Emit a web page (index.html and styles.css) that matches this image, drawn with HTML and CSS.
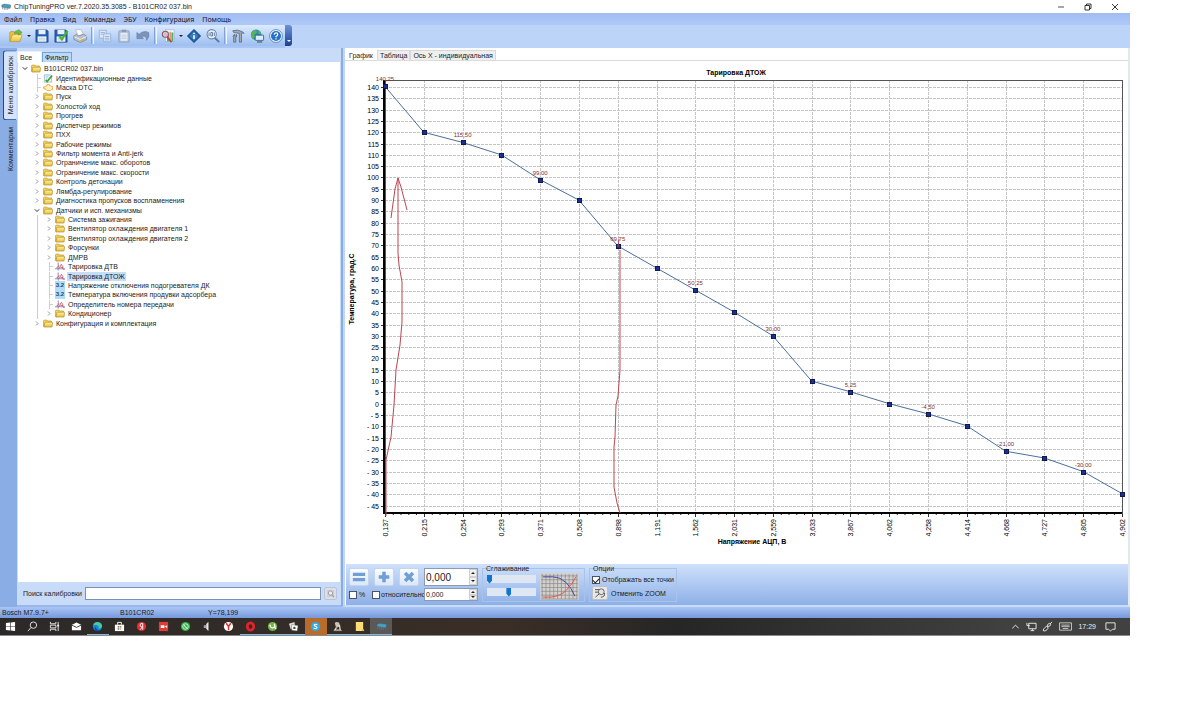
FILE: index.html
```
<!DOCTYPE html>
<html lang="ru">
<head>
    <meta charset="UTF-8">
    <meta name="viewport" content="width=device-width, initial-scale=1.0">
    <title>ChipTuningPRO</title>
    <link rel="stylesheet" href="styles.css">
</head>
<body>

    <!-- Icon set -->
    <svg class="sprite" aria-hidden="true">
        <linearGradient id="gFolder" x1="0" y1="0" x2="0" y2="1"><stop offset="0" stop-color="#fff3a0"/><stop offset="1" stop-color="#e9bd3c"/></linearGradient>
        <symbol id="folder" viewBox="0 0 11 9"><path d="M.5 8V1.5l.8-.8h3l1 1h4v1.5" fill="#f3d468" stroke="#b08a22" stroke-width=".6"/><path d="M1 8.4L2 3.6q.1-.5.6-.5h7.4q.5 0 .5.5L10 8q-.1.4-.6.4z" fill="url(#gFolder)" stroke="#a98620" stroke-width=".7"/></symbol>
        <symbol id="ident" viewBox="0 0 11 9"><path d="M1.5.5h7l1 1v7h-8z" fill="#eef6fb" stroke="#6c93aa" stroke-width=".6"/><path d="M3 6l1.6 1.8L10 1.2" fill="none" stroke="#35a23a" stroke-width="1.8"/><path d="M3 2.5h3M3 4h2" stroke="#7fb2d6" stroke-width=".6"/></symbol>
        <symbol id="dtc" viewBox="0 0 11 9"><path d="M3 2.6h1.4V1.4h3v1.2h1.2l.8 1h1.2v3.2H9.3l-1 1H4.4L3 6.4H2v-1H.6V3.8H2z" fill="#fff0c8" stroke="#efa63a" stroke-width="1"/></symbol>
        <symbol id="curve" viewBox="0 0 11 9"><path d="M3.500 0v9M0 7h11" stroke="#626c9c" stroke-width=".8"/><path d="M4.500 7l2.500-5 1.500 2.500V7l2 1M1.500 6q2 0 3-3M6 5.500h3" fill="none" stroke="#d44c62" stroke-width=".9"/></symbol>
        <symbol id="closed" viewBox="0 0 8 9"><path d="M3 2.500l2 2-2 2" fill="none" stroke="#8a8a8a" stroke-width=".9"/></symbol>
        <symbol id="open" viewBox="0 0 8 9"><path d="M1.800 3.300L4 5.500l2.200-2.200" fill="none" stroke="#333" stroke-width="1"/></symbol>
        <symbol id="twig" viewBox="0 0 8 9"><path d="M4.500 0v9M4.500 4.500H8" stroke="#bbb" stroke-width=".7"/></symbol>

        <symbol id="t-open" viewBox="0 0 16 16"><path d="M1 14V4l1-1h4l1 1.500h6V7" fill="#e9c244" stroke="#a8801a" stroke-width=".7"/><path d="M1 14.500l3-8h11l-2.500 8z" fill="url(#gFolder)" stroke="#b58f26" stroke-width=".7"/><path d="M6 5q1-4 5-3V.5L15 4l-4 3V5Q8 4.400 6 5z" fill="#6ac046" stroke="#3a8a26" stroke-width=".5"/></symbol>
        <symbol id="t-save" viewBox="0 0 16 16"><path d="M1 1h12.500L15 2.500V15H1z" fill="#2460b4" stroke="#143e86" stroke-width=".7"/><rect x="4" y="1" width="8" height="5" fill="#e8f1fb"/><rect x="3" y="8.500" width="10" height="6" fill="#fff"/><path d="M4 10.500h8M4 12.500h8" stroke="#8fb0dc" stroke-width=".8"/></symbol>
        <symbol id="t-check" viewBox="0 0 16 16"><use href="#t-save"/><path d="M6 8l3 4 6.500-10" fill="none" stroke="#4db428" stroke-width="2.400"/></symbol>
        <symbol id="t-print" viewBox="0 0 16 16"><path d="M3 1l6-.5L12 6 6 8z" fill="#fff" stroke="#98a3b5" stroke-width=".6"/><path d="M1 8l3-2 2 2 6-2 3.500 2v4l-7 3.500L1 12z" fill="#b9c0cc" stroke="#6c7484" stroke-width=".7"/><path d="M1.500 9l7 3 7-3.500" fill="none" stroke="#f2f4f8"/><path d="M8.500 13.500l4-2" stroke="#e3b030" stroke-width="1.500"/></symbol>
        <symbol id="t-copy" viewBox="0 0 16 16"><g fill="#dce7f7" stroke="#8ba7d0" stroke-width=".8"><path d="M1.500 1.500h8v9h-8z"/><path d="M6.500 5.500h8v9h-8z"/></g><path d="M3 4h5M3 6h3M8 8.500h5M8 10.500h5M8 12.500h5" stroke="#89aad8" stroke-width=".9"/></symbol>
        <symbol id="t-paste" viewBox="0 0 16 16"><rect x="2" y="2" width="12" height="13" rx="1" fill="#b0c1da" stroke="#8698b5" stroke-width=".8"/><path d="M4 4.500h8v9H4z" fill="#e6edf7"/><rect x="5.500" y=".8" width="5" height="2.600" fill="#8999b2"/><path d="M5 7h6M5 9h6M5 11h6" stroke="#b1c2da" stroke-width=".8"/></symbol>
        <symbol id="t-undo" viewBox="0 0 16 16"><path d="M1 11V4l2.500 2Q9 1 14.500 4q1.500 5-2.500 9 .5-6-5.500-4.500L8.500 11z" fill="#7d94b8" stroke="#61799e" stroke-width=".6"/></symbol>
        <symbol id="t-chart" viewBox="0 0 16 16"><rect x="5" y="1" width="10" height="13" fill="#f5f9fd" stroke="#8fa6c4" stroke-width=".6"/><path d="M8 14V7M13 14V4" stroke="#58a85c" stroke-width="2.200"/><path d="M10.500 13V3" stroke="#db9488" stroke-width="1.800"/><circle cx="5" cy="6" r="3.500" fill="#d9c0c8" stroke="#85576d" stroke-width="1.200"/><path d="M7 9l5 6" stroke="#ba473e" stroke-width="2"/></symbol>
        <symbol id="t-info" viewBox="0 0 16 16"><path d="M8 .5L15.500 8 8 15.500.5 8z" fill="#1d5fa8" stroke="#123e78"/><path d="M8 3L13 8l-5 5-5-5z" fill="#377fc6"/><path d="M8 7v4.500M8 4.200v1.600" stroke="#fff" stroke-width="1.800"/></symbol>
        <symbol id="t-find" viewBox="0 0 16 16"><circle cx="6.500" cy="6" r="5.300" fill="#e8f2fc" stroke="#6c87ad" stroke-width="1.200"/><path d="M3.500 4v4M5.500 4h2v4h-2zM9.500 4v4" fill="none" stroke="#49668e" stroke-width=".9"/><path d="M10 10l5 5" stroke="#5c78a2" stroke-width="2.200"/></symbol>
        <symbol id="t-tools" viewBox="0 0 16 16"><path d="M2 2q5-2 11 1l2 2-3-.6V15H9.500V5L3 4zM4 6q-3 2-1 4v5h2.500v-5Q8 8 6 6v2H4z" fill="#9dabb9" stroke="#45525f" stroke-width=".7"/></symbol>
        <symbol id="t-net" viewBox="0 0 16 16"><circle cx="7" cy="6.500" r="6" fill="#2f86c9"/><path d="M1 6q2-5 6-5l1 3-3 2 1 4-3 1Q1 9 1 6zM9 1.500q3 1 4 4L10 6z" fill="#55b650"/><rect x="6" y="7" width="9.500" height="6" rx=".6" fill="#d9edfb" stroke="#2b5378" stroke-width=".9"/><path d="M8 14.800h6" stroke="#355" stroke-width="1.200"/></symbol>
        <symbol id="t-help" viewBox="0 0 16 16"><circle cx="8" cy="8" r="7.300" fill="#fff" stroke="#2a62ab" stroke-width=".8"/><circle cx="8" cy="8" r="5.800" fill="#2572c7"/><path d="M6 6.500Q6 4.300 8 4.300t2 1.900Q10 7.300 8 8.500v1M8 10.500v1.600" fill="none" stroke="#fff" stroke-width="1.400"/></symbol>
        <symbol id="chip" viewBox="0 0 12 8"><path d="M1 1.500L4 .5l7.500 1v3L9 5.500 1 4z" fill="#4d9cba" stroke="#255f7d" stroke-width=".5"/><path d="M2 4v2.500M4 5v2.500M6 5v2.500M8 5.500v2M10.500 5v1.500" stroke="#6a7882" stroke-width=".8"/></symbol>
    </svg>

    <div class="desktop">
        <header class="titlebar">
            <svg class="app-icon"><use href="#chip"/></svg>
            <h1>ChipTuningPRO ver.7.2020.35.3085 - B101CR02 037.bin</h1>
            <div class="window-buttons">
                <button aria-label="Свернуть"><svg viewBox="0 0 8 8"><path d="M1 4h6" stroke="#222" stroke-width=".8"/></svg></button>
                <button aria-label="Восстановить"><svg viewBox="0 0 8 8"><path d="M1 2.500h4.500V7H1zM2.500 2.500V1H7v4.500H5.500" fill="none" stroke="#222" stroke-width=".9"/></svg></button>
                <button aria-label="Закрыть"><svg viewBox="0 0 8 8"><path d="M1 1l6 6M7 1L1 7" stroke="#222" stroke-width=".9"/></svg></button>
            </div>
        </header>

        <nav class="menu">
            <a href="#">Файл</a><a href="#">Правка</a><a href="#">Вид</a><a href="#">Команды</a><a href="#">ЭБУ</a><a href="#">Конфигурация</a><a href="#">Помощь</a>
        </nav>

        <div class="toolbar">
            <div class="tools">
                <button aria-label="Открыть"><svg><use href="#t-open"/></svg></button>
                <i class="drop"></i>
                <button aria-label="Сохранить"><svg><use href="#t-save"/></svg></button>
                <button aria-label="Сохранить с проверкой"><svg><use href="#t-check"/></svg></button>
                <button aria-label="Печать"><svg><use href="#t-print"/></svg></button>
                <i class="sep"></i>
                <button aria-label="Копировать"><svg><use href="#t-copy"/></svg></button>
                <button aria-label="Вставить"><svg><use href="#t-paste"/></svg></button>
                <button aria-label="Отменить"><svg><use href="#t-undo"/></svg></button>
                <i class="sep"></i>
                <button aria-label="Сравнение"><svg><use href="#t-chart"/></svg></button>
                <i class="drop"></i>
                <button aria-label="Информация"><svg><use href="#t-info"/></svg></button>
                <button aria-label="Поиск"><svg><use href="#t-find"/></svg></button>
                <i class="sep"></i>
                <button aria-label="Настройки"><svg><use href="#t-tools"/></svg></button>
                <button aria-label="Сеть"><svg><use href="#t-net"/></svg></button>
                <button aria-label="Справка"><svg><use href="#t-help"/></svg></button>
            </div>
            <button class="overflow" aria-label="Ещё"><i class="drop"></i></button>
        </div>

        <main class="workspace">
            <div class="side-tabs">
                <button class="active">Меню калибровок</button>
                <button>Комментарии</button>
            </div>

            <section class="sidebar">
                <div class="tabs">
                    <button class="active">Все</button>
                    <button>Фильтр</button>
                </div>
                <div class="tree-box">
                    <ul class="tree" id="tree"></ul>
                </div>
                <div class="search">
                    <label for="search">Поиск калибровки</label>
                    <input type="text" id="search">
                    <button aria-label="Найти"><svg viewBox="0 0 10 10"><path d="M1 1h8v8H1z" fill="#cfcfd6"/><circle cx="5" cy="4.500" r="2.400" fill="#eee" stroke="#9a9aa6"/><path d="M6.500 6.500L9 9" stroke="#9a9aa6" stroke-width="1.200"/></svg></button>
                </div>
            </section>

            <section class="editor">
                <div class="tabs chart-tabs">
                    <button class="active">График</button>
                    <button>Таблица</button>
                    <button>Ось X - индивидуальная</button>
                </div>
                <div class="chart-page">
                    <svg class="chart" id="chart" viewBox="0 0 783 503"></svg>
                </div>

                <div class="controls">
                    <div class="value-group">
                        <div class="row">
                            <button class="op" aria-label="Равно"><svg viewBox="0 0 16 16"><path d="M1 5h14M1 11h14" stroke="#6f9fd4" stroke-width="3.500"/></svg></button>
                            <button class="op" aria-label="Прибавить"><svg viewBox="0 0 16 16"><path d="M2 8h12M8 2v12" stroke="#6f9fd4" stroke-width="4"/></svg></button>
                            <button class="op" aria-label="Умножить"><svg viewBox="0 0 16 16"><path d="M3.500 3.500l9 9M12.500 3.500l-9 9" stroke="#6f9fd4" stroke-width="4"/></svg></button>
                            <span class="spin big"><input type="text" value="0,000" aria-label="Значение"><span class="arrows"><button aria-label="Больше"></button><button aria-label="Меньше"></button></span></span>
                        </div>
                        <div class="row tight">
                            <label class="check percent"><input type="checkbox">%</label>
                            <label class="check relative"><input type="checkbox">относительно</label>
                            <span class="spin"><input type="text" value="0,000" aria-label="Шаг"><span class="arrows"><button aria-label="Больше"></button><button aria-label="Меньше"></button></span></span>
                        </div>
                    </div>

                    <fieldset class="smooth">
                        <legend>Сглаживание</legend>
                        <div class="sliders">
                            <input type="range" min="0" max="100" value="0" aria-label="Сглаживание 1">
                            <input type="range" min="0" max="100" value="44" aria-label="Сглаживание 2">
                        </div>
                        <svg class="preview" viewBox="0 0 40 28"><rect width="40" height="28" fill="#d4d2cf"/><path d="M2 1v26M6 1v26M10 1v26M14 1v26M18 1v26M22 1v26M26 1v26M30 1v26M34 1v26M38 1v26M1 3h38M1 7h38M1 11h38M1 15h38M1 19h38M1 23h38M1 27h38" stroke="#8e8c8a" stroke-width=".8"/><path d="M3 4h10q8 0 14 6 5 5 9 14" fill="none" stroke="#4544a4"/><path d="M3 25h8q10-1 16-7 6-6 10-14" fill="none" stroke="#df5348"/></svg>
                    </fieldset>

                    <fieldset class="options">
                        <legend>Опции</legend>
                        <label class="check"><input type="checkbox" checked>Отображать все точки</label>
                        <div class="zoom-row">
                            <button id="zoomOff" aria-label="Отменить ZOOM"><svg viewBox="0 0 14 12"><circle cx="8.500" cy="4.500" r="3.500" fill="#e5e5e5" stroke="#555"/><path d="M6 7l-4.500 4M1 2h5M1 5h4M8 11q5 0 4.500-5" fill="none" stroke="#555" stroke-width="1.200"/></svg></button>
                            <label for="zoomOff">Отменить ZOOM</label>
                        </div>
                    </fieldset>
                </div>
            </section>
        </main>

        <footer class="status">
            <span>Bosch M7.9.7+</span><span>B101CR02</span><span>Y=78,199</span>
        </footer>

        <div class="taskbar">
            <div class="apps">
                <button aria-label="Пуск"><svg viewBox="0 0 12 12"><path d="M1 2.300L5.500 1.700v4H1zM6.200 1.600L11 1v4.700H6.200zM1 6.400h4.500v4L1 9.800zM6.200 6.400H11V11l-4.800-.6z" fill="#fff"/></svg></button>
                <button aria-label="Поиск Windows"><svg viewBox="0 0 12 12"><circle cx="7" cy="4.500" r="3.500" fill="none" stroke="#eee"/><path d="M4.500 7L1 11" stroke="#eee"/></svg></button>
                <button aria-label="Представление задач"><svg viewBox="0 0 12 12"><path d="M1.500 1v2h6V1M1.500 11V9h6v2M1.500 4.500h6v3h-6zM10 1v10" fill="none" stroke="#eee"/><path d="M9 4h2v2H9z" fill="#eee"/></svg></button>
                <button aria-label="Почта"><svg viewBox="0 0 12 12"><path d="M1 4l5-2.500L11 4v6H1z" fill="#fff"/><path d="M1 4.500L6 7l5-2.500" fill="none" stroke="#333"/></svg></button>
                <button class="running" aria-label="Edge"><svg viewBox="0 0 12 12"><circle cx="6" cy="6" r="5" fill="#1684d8"/><path d="M1.200 5Q2 1 6 1q5 .5 5 5-1 2.500-4 2Q8 5 5 4.400 2.500 4 1.200 5z" fill="#45c9a0"/><path d="M4 6q0 4 5 4-2 2-5 .6Q2 9 4 6z" fill="#104c9b"/></svg></button>
                <button aria-label="Магазин"><svg viewBox="0 0 12 12"><path d="M1 4h10v7H1z" fill="#fff"/><path d="M4 4V1.500h4V4" fill="none" stroke="#fff"/><path d="M4 5.500h1.700v1.700H4z" fill="#e74b35"/><path d="M6.300 5.500H8v1.700H6.300z" fill="#64a936"/><path d="M4 7.800h1.700v1.700H4z" fill="#3185d0"/><path d="M6.300 7.800H8v1.700H6.300z" fill="#e9b43a"/></svg></button>
                <button aria-label="Яндекс"><svg viewBox="0 0 12 12"><circle cx="6" cy="6" r="5" fill="#e62f32"/><path d="M7.300 9.500v-7H6.500q-2 0-2 2t2.500 2L4.500 9.500" fill="none" stroke="#fff"/></svg></button>
                <button aria-label="Запись экрана"><svg viewBox="0 0 12 12"><rect x="1" y="1" width="10" height="10" fill="#e53935"/><path d="M3 4.500h4v3H3zM7.500 6L10 4.500v3z" fill="#fff"/></svg></button>
                <button aria-label="WhatsApp"><svg viewBox="0 0 12 12"><circle cx="6" cy="6" r="5" fill="#33b34b"/><circle cx="6" cy="6" r="3" fill="none" stroke="#d9f7d9"/><path d="M4.800 4.500q.3 2.500 2.700 3" fill="none" stroke="#fff"/></svg></button>
                <button aria-label="Звук"><svg viewBox="0 0 12 12"><path d="M3 4.500h2L8 1v10L5 7.500H3z" fill="#9ea3a8"/><path d="M6 3l2-2v10L6 8.500z" fill="#e5e5e5"/></svg></button>
                <button aria-label="Яндекс Браузер"><svg viewBox="0 0 12 12"><circle cx="6" cy="6" r="5" fill="#fff"/><path d="M3.500 2.500L6 6l2.500-3.500M6 6v4" fill="none" stroke="#e32b2b" stroke-width="1.600"/></svg></button>
                <button class="running" aria-label="Opera"><svg viewBox="0 0 12 12"><ellipse cx="6" cy="6" rx="3.500" ry="4" fill="none" stroke="#e3222c" stroke-width="3"/></svg></button>
                <button class="running" aria-label="uTorrent"><svg viewBox="0 0 12 12"><circle cx="6" cy="6" r="5" fill="#70b544"/><path d="M3 4q1 4 3.500 3.500T8 3l1 5 1 .5" fill="none" stroke="#fff" stroke-width="1.400"/></svg></button>
                <button class="running" aria-label="Карты"><svg viewBox="0 0 12 12"><path d="M1 3l6-2 1 6-5 2z" fill="#ddd"/><path d="M4 4l7 1-1 6-6-1z" fill="#fff" stroke="#555" stroke-width=".5"/><circle cx="7" cy="7.500" r="1.300" fill="#444"/></svg></button>
                <button class="alert" aria-label="Skype"><svg viewBox="0 0 12 12"><circle cx="6" cy="6" r="5" fill="#2cace3"/><path d="M8 4.200Q6 2.800 4.700 4q-.7 1.200 1.300 1.800t1.700 1.800Q6 9 4 7.600" fill="none" stroke="#fff" stroke-width="1.100"/></svg></button>
                <button class="running" aria-label="Программатор"><svg viewBox="0 0 12 12"><path d="M3 2q2-2 5 0v4L6 7 4 6z" fill="#c8c3ba"/><path d="M8 4l1 6H3l2-3" fill="none" stroke="#e6ddca" stroke-width="1.400"/><path d="M2 10.500h9" stroke="#9a948c"/></svg></button>
                <button class="running" aria-label="Проводник"><svg viewBox="0 0 12 12"><path d="M2 1h8v8l-1 2H2z" fill="#fbdd77"/><path d="M9 9h2v2H9z" fill="#e3b842"/></svg></button>
                <button class="running current" aria-label="ChipTuningPRO"><svg viewBox="0 -2 12 12"><use href="#chip" width="12" height="8"/></svg></button>
            </div>
            <div class="tray">
                <svg viewBox="0 0 12 12"><path d="M2.500 8L6 4.500 9.500 8" fill="none" stroke="#eee"/></svg>
                <svg viewBox="0 0 12 12"><path d="M3 2.500h8v6H3zM5 10.500h4M7 8.500v2M1 2v3h3" fill="none" stroke="#eee"/></svg>
                <svg viewBox="0 0 12 12"><path d="M11 1L8.500 3.500M6 6l2.500-.5 1-1.500-1.500-1.500L6 4l-.5 2.500M6 6q1.500 2-.5 3.500T2 11q-1.500-1 0-2.500t3-3" fill="none" stroke="#eee"/></svg>
                <svg class="keyboard" viewBox="0 0 15 12"><path d="M1 2h13v8H1zM3 4.500h9M3 6.200h9M4.500 8.200h6" fill="none" stroke="#ddd" stroke-width=".9"/></svg>
                <time>17:29</time>
                <svg class="notice" viewBox="0 0 12 12"><path d="M1 2h10v7H8l-2 2-2-2H1z" fill="none" stroke="#eee"/></svg>
            </div>
        </div>
    </div>

    <script src="script.js"></script>
</body>
</html>
```
FILE: styles.css
```
* {
    box-sizing: border-box;
}

body {
    margin: 0;
    padding-right: 70px;
    background: #fff;
    font-family: "Liberation Sans", Arial, sans-serif;
    font-size: 7px;
    line-height: 9px;
    color: #1c1c24;
}

button, input, legend, label {
    font: inherit;
    color: inherit;
}

button {
    margin: 0;
    padding: 0;
    border: none;
    background: none;
}

h1, ul, fieldset {
    margin: 0;
    padding: 0;
}

svg {
    display: block;
}

.sprite {
    position: absolute;
    width: 0;
    height: 0;
}

/* Title and menu */
.titlebar {
    display: flex;
    align-items: center;
    height: 13px;
    padding: 0 11px 0 1px;
    gap: 3px;
}

.titlebar h1 {
    flex: 1;
    font-size: 7px;
    font-weight: normal;
}

.app-icon {
    width: 10px;
    height: 8px;
}

.window-buttons {
    display: flex;
    gap: 19px;
}

.window-buttons svg {
    width: 8px;
    height: 8px;
}

.menu {
    display: flex;
    align-items: center;
    gap: 8px;
    height: 12px;
    padding-left: 4px;
    background: linear-gradient(#a0bdf3, #afc8f7);
    font-family: "Noto Sans", "Open Sans", sans-serif;
}

.menu a {
    color: #14141e;
    text-decoration: none;
}

/* Toolbar */
.toolbar {
    display: flex;
    height: 23px;
    background: #bdd4f9;
}

.tools {
    display: flex;
    align-items: center;
    gap: 3px;
    padding: 0 1px 0 8px;
    background: linear-gradient(#dcebff, #9dbef0);
    border-bottom: 2px solid #aac4f3;
}

.tools button, .tools svg {
    width: 16px;
    height: 14px;
}

.drop {
    width: 4px;
    border: 2px solid transparent;
    border-top-color: #222;
    border-bottom: none;
}

.sep {
    width: 3px;
    height: 17px;
    border-left: 1px solid #80a2dc;
    border-right: 1px solid #eef5ff;
}

.overflow {
    display: flex;
    align-items: flex-end;
    justify-content: center;
    width: 7px;
    height: 21px;
    padding-bottom: 4px;
    background: linear-gradient(#6f92d6, #1c3f90);
    border-radius: 0 3px 3px 0;
}

.overflow .drop {
    border-top-color: #fff;
}

/* Workspace */
.workspace {
    display: grid;
    grid-template-columns: 17px minmax(200px, 328fr) minmax(400px, 785fr);
    background: #c0d5f8;
}

.side-tabs {
    display: flex;
    flex-direction: column;
    align-items: flex-end;
    gap: 2px;
    padding-top: 2px;
    background: #8aade6;
}

.side-tabs button {
    width: 14px;
    padding: 5px 0;
    writing-mode: vertical-rl;
    transform: rotate(180deg);
    line-height: 13px;
}

.side-tabs .active {
    background: #d4e4fc;
    border: 1px solid #23488e;
    border-left-color: #c8dcfb;
    border-radius: 0 3px 3px 0;
}

.sidebar {
    display: flex;
    flex-direction: column;
    margin-right: 2px;
    padding-top: 3px;
    background: #c8dcfa;
    border-right: 2px solid #8badde;
    border-bottom: 2px solid #9ab9ea;
}

.tabs {
    display: flex;
    align-items: flex-end;
    height: 11px;
}

.tabs button {
    height: 10px;
    padding: 0 2px;
    border: 1px solid #6ea6d8;
    border-bottom: none;
    background: #bcd8f8;
}

.tabs .active {
    height: 11px;
    border-color: #e8f0fb;
    background: #fff;
}

.sidebar .active {
    width: 25px;
    text-align: left;
}

.tree-box {
    flex: 1;
    margin: 0 1px;
    padding: 2px 0;
    background: #fff;
}

.tree {
    display: grid;
    grid-auto-rows: 1fr;
    height: 264px;
    list-style: none;
}

.tree li {
    display: flex;
    align-items: center;
    gap: 2px;
    padding-left: 3px;
    white-space: nowrap;
}

.tree .level-1 {
    padding-left: 15px;
}

.tree .level-2 {
    padding-left: 27px;
    background: linear-gradient(#ccc, #ccc) 19px 0 / 1px 100% no-repeat;
}

.tree .toggle {
    width: 8px;
    height: 9px;
}

.tree .icon {
    width: 10px;
    height: 9px;
}

.tree .number {
    background: #b4dcf4;
    color: #17497c;
    font-size: 6px;
    text-align: center;
}

.tree span {
    padding: 0 1px;
}

.tree .selected span {
    background: #c4def8;
}

.search {
    display: flex;
    align-items: center;
    gap: 3px;
    height: 23px;
    padding: 0 4px 0 6px;
}

.search input {
    flex: 1;
    min-width: 0;
    height: 13px;
    padding: 0 2px;
    border: 1px solid #7c92b4;
    background: #fff;
}

.search button {
    padding: 1px;
    border: 1px solid #b8c4da;
    border-radius: 2px;
    background: #dcdfe6;
}

.search button svg {
    width: 9px;
    height: 9px;
}

/* Chart editor */
.editor {
    display: flex;
    flex-direction: column;
    min-width: 0;
    padding-top: 1px;
    background: #fff;
    border-right: 2px solid #e3e7ef;
    border-bottom: 2px solid #c8dcfa;
}

.chart-tabs {
    height: 12px;
    border-bottom: 1px solid #dcdcdc;
}

.chart-tabs button {
    border-color: #d8d8d8;
    background: #efefef;
}

.chart-tabs .active {
    height: 11px;
    padding: 0 3px;
    border-color: #fff;
    background: #fff;
}

.chart {
    width: 100%;
    height: auto;
    font-size: 7px;
}

.chart .heading {
    font-weight: bold;
    text-anchor: middle;
}

.chart .grid {
    stroke: #c4c4c4;
    stroke-width: 1;
    stroke-dasharray: 3 1;
}

.chart .tick {
    stroke: #333;
    stroke-width: 1;
}

.chart .frame {
    fill: none;
    stroke: #555;
}

.chart .axis {
    fill: none;
    stroke: #000;
    stroke-width: 2;
}

.chart .series {
    fill: none;
    stroke: #4a6f9e;
}

.chart .point {
    fill: #1c2f94;
    stroke: #0e1950;
    stroke-width: 1;
}

.chart .mark {
    font-size: 6px;
    fill: #84302c;
    text-anchor: middle;
}

.chart .pen {
    fill: none;
    stroke: #bd4650;
}

.chart .y-label {
    text-anchor: end;
}

/* Value controls */
.controls {
    display: flex;
    align-items: flex-start;
    gap: 4px;
    height: 41px;
    margin: 0 0 0 1px;
    padding: 4px 3px 0;
    background: linear-gradient(#cfe1fb, #8db0e7);
}

.value-group {
    display: flex;
    flex-direction: column;
    gap: 2px;
}

.row {
    display: flex;
    align-items: center;
    gap: 5px;
}

.tight {
    gap: 1px;
}

.op {
    width: 20px;
    height: 18px;
    padding: 1px 2px;
    border: 1px solid #c5d5ec;
    border-radius: 2px;
    background: linear-gradient(#fafcff, #dce8f8);
}

.op svg {
    width: 14px;
    height: 14px;
}

.spin {
    display: flex;
    width: 54px;
    height: 13px;
    border: 1px solid #8b9bb5;
    background: #fff;
}

.spin input {
    flex: 1;
    min-width: 0;
    padding: 0 1px;
    border: none;
}

.spin.big {
    height: 18px;
}

.spin.big input {
    font-size: 10px;
}

.arrows {
    display: flex;
    flex-direction: column;
    width: 8px;
}

.arrows button {
    display: flex;
    flex: 1;
    align-items: center;
    justify-content: center;
    border: 1px solid #d0d0d0;
    background: #f0f0f0;
}

.arrows button::after {
    content: "";
    border: 2px solid transparent;
    border-bottom-color: #222;
    border-top: none;
}

.arrows button:last-child::after {
    transform: rotate(180deg);
}

.check {
    display: flex;
    align-items: center;
    gap: 2px;
    white-space: nowrap;
}

.check input {
    appearance: none;
    display: grid;
    flex: none;
    place-items: center;
    width: 8px;
    height: 8px;
    margin: 0;
    border: 1px solid #4a5464;
    background: #fff;
}

.check input:checked::after {
    content: "";
    width: 5px;
    height: 3px;
    border: solid #222;
    border-width: 0 0 1px 1px;
    transform: rotate(-45deg);
}

.percent {
    width: 22px;
}

.relative {
    width: 51px;
    gap: 1px;
}

fieldset {
    position: relative;
    min-width: 0;
    height: 34px;
    border: 1px solid #a9c2e8;
}

legend {
    position: absolute;
    top: -5px;
    left: 2px;
    padding: 0 1px;
}

.smooth {
    display: flex;
    gap: 4px;
    width: 103px;
    padding: 4px 4px 0;
}

.sliders {
    display: flex;
    flex-direction: column;
    gap: 5px;
    padding-top: 2px;
}

.sliders input {
    appearance: none;
    width: 49px;
    height: 8px;
    margin: 0;
    background: #dfe7f2;
}

.sliders input::-webkit-slider-thumb {
    appearance: none;
    width: 5px;
    height: 9px;
    background: #0f75cf;
    clip-path: polygon(0 0, 100% 0, 100% 70%, 50% 100%, 0 70%);
}

.preview {
    width: 39px;
    height: 27px;
}

.options {
    width: 88px;
    padding: 6px 2px 0;
}

.zoom-row {
    display: flex;
    align-items: center;
    gap: 3px;
    margin-top: 2px;
}

.zoom-row button {
    padding: 1px;
    border: 1px solid #c0c0c0;
    border-radius: 2px;
    background: #e9e9e9;
}

.zoom-row svg {
    width: 12px;
    height: 10px;
}

/* Status and taskbar */
.status {
    display: grid;
    grid-template-columns: 118px 88px 1fr;
    align-items: center;
    height: 11px;
    padding-left: 2px;
    background: linear-gradient(#a9c6f5, #7799dc);
}

.taskbar {
    display: flex;
    align-items: center;
    justify-content: space-between;
    height: 18px;
    background: linear-gradient(90deg, #2b2928, #3a2e27 45%, #262626 60%, #414141 90%);
    border-bottom: 1px solid #8a8a8a;
}

.apps {
    display: grid;
    grid-template-columns: repeat(18, 1fr);
    width: 392px;
    height: 17px;
}

.apps button {
    display: flex;
    align-items: center;
    justify-content: center;
    height: 17px;
    border-bottom: 1px solid transparent;
}

.apps svg {
    width: 11px;
    height: 11px;
}

.apps .running {
    border-bottom-color: #7eb7e2;
}

.apps .alert {
    background: #b96b2c;
}

.apps .current {
    background: #5b5957;
}

.tray {
    display: flex;
    align-items: center;
    gap: 5px;
    padding-right: 14px;
    color: #f0f0f0;
}

.tray svg {
    width: 11px;
    height: 11px;
}

.tray .keyboard {
    width: 15px;
}

.tray .notice {
    margin-left: 4px;
}
```
FILE: script.js
```
const tree = [
    [0, 'open', 'folder', 'B101CR02 037.bin'],
    [1, 'twig', 'ident', 'Идентификационные данные'],
    [1, 'twig', 'dtc', 'Маска DTC'],
    [1, 'closed', 'folder', 'Пуск'],
    [1, 'closed', 'folder', 'Холостой ход'],
    [1, 'closed', 'folder', 'Прогрев'],
    [1, 'closed', 'folder', 'Диспетчер режимов'],
    [1, 'closed', 'folder', 'ПХХ'],
    [1, 'closed', 'folder', 'Рабочие режимы'],
    [1, 'closed', 'folder', 'Фильтр момента и Anti-jerk'],
    [1, 'closed', 'folder', 'Ограничение макс. оборотов'],
    [1, 'closed', 'folder', 'Ограничение макс. скорости'],
    [1, 'closed', 'folder', 'Контроль детонации'],
    [1, 'closed', 'folder', 'Лямбда-регулирование'],
    [1, 'closed', 'folder', 'Диагностика пропусков воспламенения'],
    [1, 'open', 'folder', 'Датчики и исп. механизмы'],
    [2, 'closed', 'folder', 'Система зажигания'],
    [2, 'closed', 'folder', 'Вентилятор охлаждения двигателя 1'],
    [2, 'closed', 'folder', 'Вентилятор охлаждения двигателя 2'],
    [2, 'closed', 'folder', 'Форсунки'],
    [2, 'closed', 'folder', 'ДМРВ'],
    [2, 'twig', 'curve', 'Тарировка ДТВ'],
    [2, 'twig', 'curve', 'Тарировка ДТОЖ', true],
    [2, 'twig', 'number', 'Напряжение отключения подогревателя ДК'],
    [2, 'twig', 'number', 'Температура включения продувки адсорбера'],
    [2, 'twig', 'curve', 'Определитель номера передачи'],
    [2, 'closed', 'folder', 'Кондиционер'],
    [1, 'closed', 'folder', 'Конфигурация и комплектация']
];

const iconOf = name => name === 'number'
    ? '<b class="icon number">3.2</b>'
    : `<svg class="icon"><use href="#${name}"/></svg>`;

document.getElementById('tree').innerHTML = tree.map(([level, toggle, icon, name, selected]) =>
    `<li class="level-${level}${selected ? ' selected' : ''}">
        <svg class="toggle"><use href="#${toggle}"/></svg>
        ${iconOf(icon)}
        <span>${name}</span>
    </li>`).join('');

// Chart
const volts = ['0,137', '0,215', '0,254', '0,293', '0,371', '0,508', '0,898', '1,191', '1,562', '2,031',
    '2,559', '3,633', '3,867', '4,062', '4,258', '4,414', '4,668', '4,727', '4,805', '4,902'];
const temps = [140.25, 120, 115.5, 110, 99, 90, 69.75, 60, 50.25, 40.5, 30, 10, 5.25, 0, -4.5, -9.75, -21, -24, -30, -39.75];

const left = 40, right = 777, top_ = 19, bottom = 452;
const px = i => left + i * (right - left) / (volts.length - 1);
const py = t => 26 + (140 - t) * 418.5 / 185;

let out = '<text class="heading" x="391" y="14">Тарировка ДТОЖ</text>';
out += '<text class="heading" x="407" y="483">Напряжение АЦП, В</text>';
out += '<text class="heading" transform="translate(9 228) rotate(-90)">Температура, град.С</text>';

for (let t = 140; t >= -45; t -= 5) {
    const y = Math.round(py(t)) + 0.5;
    out += `<line class="grid" x1="${left}" x2="${right}" y1="${y}" y2="${y}"/>`;
    out += `<line class="tick" x1="${left - 4}" x2="${left}" y1="${y}" y2="${y}"/>`;
    out += `<text class="y-label" x="34" y="${y + 2}">${t < 0 ? '- ' + -t : t}</text>`;
}

volts.forEach((v, i) => {
    const x = Math.round(px(i)) + 0.5;
    if (i > 0) out += `<line class="grid" x1="${x}" x2="${x}" y1="${top_}" y2="${bottom}"/>`;
    for (let k = 0; k < 5 && (k === 0 || i < volts.length - 1); k++) {
        const m = x + k * 7.76;
        out += `<line class="tick" x1="${m}" x2="${m}" y1="${bottom}" y2="${bottom + (k ? 2 : 4)}"/>`;
    }
    out += `<text class="y-label" transform="translate(${x + 2} 458) rotate(-90)">${v}</text>`;
});

out += `<rect class="frame" x="${left}.5" y="${top_}.5" width="${right - left}" height="${bottom - top_}"/>`;
out += `<path class="axis" d="M${left - 1} ${top_}V${bottom}H${right}"/>`;
out += `<polyline class="series" points="${temps.map((t, i) => px(i) + ',' + py(t)).join(' ')}"/>`;

temps.forEach((t, i) => {
    out += `<rect class="point" x="${Math.round(px(i)) - 1.5}" y="${Math.round(py(t)) - 1.5}" width="4" height="4"/>`;
    if (i % 2 === 0) {
        out += `<text class="mark" x="${px(i)}" y="${py(t) - 5}">${t.toFixed(2).replace('.', ',')}</text>`;
    }
});

out += '<path class="pen" d="M41 455V399L46 376 49 344 51 309 55 284 57 261V221L54 204 53 192V117M46 157L50 128 53 117 56 126 62 149"/>';
out += '<path class="pen" d="M274 178L273 186M275 189V309L273 335 271 344 270 376 269 386V426L272 442 275 452"/>';

document.getElementById('chart').innerHTML = out;
```
